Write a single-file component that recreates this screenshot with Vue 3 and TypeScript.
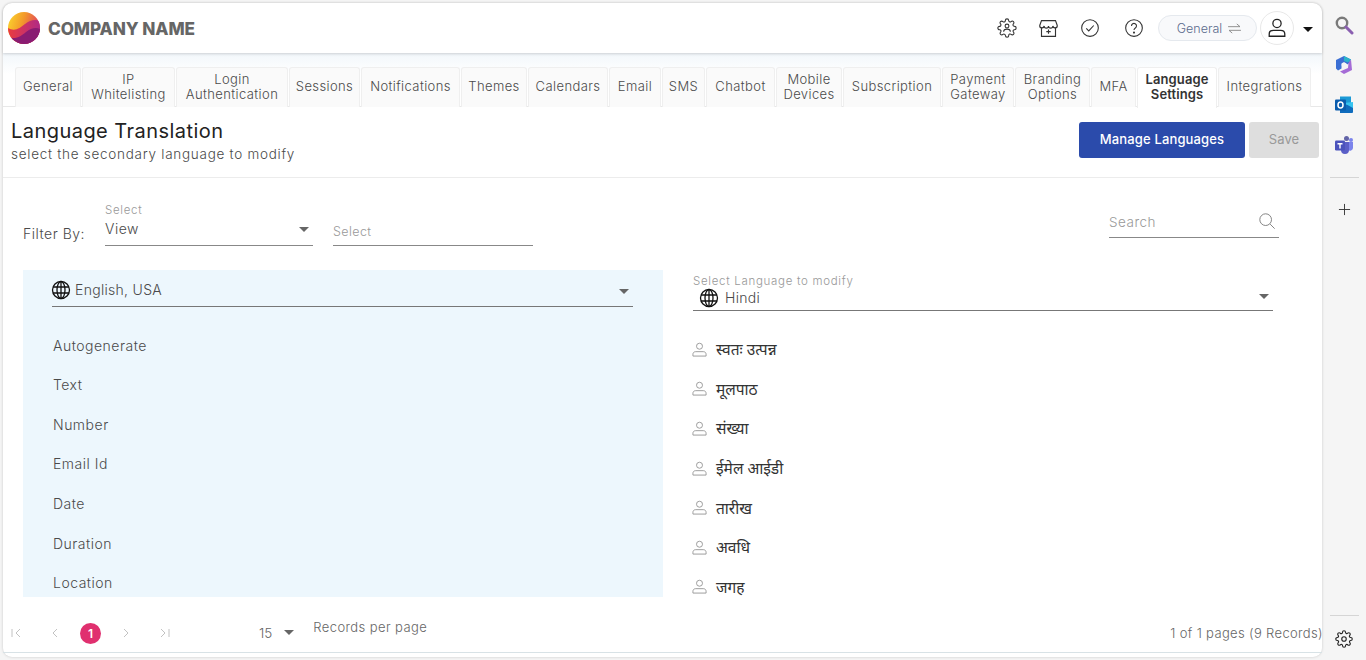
<script setup lang="ts">
const tabs = [
  { label: ['General'], w: 66 },
  { label: ['IP', 'Whitelisting'], w: 93 },
  { label: ['Login', 'Authentication'], w: 112 },
  { label: ['Sessions'], w: 71 },
  { label: ['Notifications'], w: 99 },
  { label: ['Themes'], w: 66 },
  { label: ['Calendars'], w: 80 },
  { label: ['Email'], w: 52 },
  { label: ['SMS'], w: 43 },
  { label: ['Chatbot'], w: 69 },
  { label: ['Mobile', 'Devices'], w: 66 },
  { label: ['Subscription'], w: 98 },
  { label: ['Payment', 'Gateway'], w: 72 },
  { label: ['Branding', 'Options'], w: 75 },
  { label: ['MFA'], w: 45 },
  { label: ['Language', 'Settings'], w: 80, active: true },
  { label: ['Integrations'], w: 93 },
]
const english = ['Autogenerate', 'Text', 'Number', 'Email Id', 'Date', 'Duration', 'Location']
const hindi = ['स्वतः उत्पन्न', 'मूलपाठ', 'संख्या', 'ईमेल आईडी', 'तारीख', 'अवधि', 'जगह']
const gear =
  'M19.4 15a1.65 1.65 0 0 0 .33 1.82l.06.06a2 2 0 0 1 0 2.83 2 2 0 0 1-2.83 0l-.06-.06a1.65 1.65 0 0 0-1.82-.33 1.65 1.65 0 0 0-1 1.51V21a2 2 0 0 1-2 2 2 2 0 0 1-2-2v-.09A1.65 1.65 0 0 0 9 19.4a1.65 1.65 0 0 0-1.82.33l-.06.06a2 2 0 0 1-2.83 0 2 2 0 0 1 0-2.83l.06-.06a1.65 1.65 0 0 0 .33-1.82 1.65 1.65 0 0 0-1.51-1H3a2 2 0 0 1-2-2 2 2 0 0 1 2-2h.09A1.65 1.65 0 0 0 4.6 9a1.65 1.65 0 0 0-.33-1.82l-.06-.06a2 2 0 0 1 0-2.83 2 2 0 0 1 2.83 0l.06.06a1.65 1.65 0 0 0 1.82.33H9a1.65 1.65 0 0 0 1-1.51V3a2 2 0 0 1 2-2 2 2 0 0 1 2 2v.09a1.65 1.65 0 0 0 1 1.51 1.65 1.65 0 0 0 1.82-.33l.06-.06a2 2 0 0 1 2.83 0 2 2 0 0 1 0 2.83l-.06.06a1.65 1.65 0 0 0-.33 1.82V9a1.65 1.65 0 0 0 1.51 1H21a2 2 0 0 1 2 2 2 2 0 0 1-2 2h-.09a1.65 1.65 0 0 0-1.51 1z'
</script>

<template>
  <div class="page">
    <main class="card">
      <header class="topbar">
        <svg class="logo" viewBox="0 0 32 32" aria-hidden="true">
          <defs>
            <clipPath id="logoClip"><circle cx="16" cy="16" r="16" /></clipPath>
            <linearGradient id="lgA" x1="0" y1="0" x2="1" y2="0.3">
              <stop offset="0" stop-color="#fbd92e" />
              <stop offset="0.5" stop-color="#f39a2a" />
              <stop offset="1" stop-color="#e0405f" />
            </linearGradient>
            <linearGradient id="lgB" x1="0" y1="0" x2="1" y2="0">
              <stop offset="0" stop-color="#ea3c3f" />
              <stop offset="1" stop-color="#b02a86" />
            </linearGradient>
          </defs>
          <g clip-path="url(#logoClip)">
            <rect width="32" height="32" fill="url(#lgA)" />
            <path d="M0 16c7 4 12 0 17-4s10-5 15-3v23H0z" fill="url(#lgB)" />
            <path d="M0 25c8 3 13-1 18-5s10-5 14-3v15H0z" fill="#8a1c72" />
          </g>
        </svg>
        <span class="brand">COMPANY NAME</span>
        <div class="top-actions">
          <svg class="ticon cog" viewBox="0 0 24 24">
            <path :d="gear" />
            <circle cx="12" cy="9.6" r="2.3" />
            <path d="M8 16.5c0-2 1.8-3.2 4-3.2s4 1.200 4 3.200" />
          </svg>
          <svg class="ticon store" viewBox="0 0 24 24">
            <path d="M4 3h16l2 5.500a2.500 2.500 0 0 1-5 .5 2.500 2.500 0 0 1-5 0 2.500 2.500 0 0 1-5 0 2.500 2.500 0 0 1-5-.5z" />
            <path d="M4 11v10h16V11M12 13v5M9.500 15.500h5" />
          </svg>
          <svg class="ticon check" viewBox="0 0 24 24">
            <circle cx="12" cy="12" r="10" />
            <path d="M7.500 12.500l3 3 6-6.500" />
          </svg>
          <svg class="ticon help" viewBox="0 0 24 24">
            <circle cx="12" cy="12" r="10" />
            <path d="M9 9.500a3 3 0 1 1 4.600 2.500c-1 .7-1.600 1.300-1.600 2.500" />
            <circle cx="12" cy="17.500" r=".6" />
          </svg>
          <div class="pill">
            <span>General</span>
            <svg viewBox="0 0 16 12" class="swap">
              <path d="M1 4h13L10.500 1M15 8H2l3.500 3" />
            </svg>
          </div>
          <div class="avatar">
            <svg viewBox="0 0 24 24">
              <circle cx="12" cy="7" r="4.500" />
              <path d="M3.500 21v-2.500c0-2.500 2-4 4.500-4h8c2.500 0 4.500 1.500 4.500 4V21z" />
            </svg>
          </div>
          <span class="caret dark"></span>
        </div>
      </header>

      <nav class="tabstrip">
        <div
          v-for="t in tabs"
          :key="t.label[0]"
          class="tab"
          :class="{ active: t.active }"
          :style="{ width: t.w + 'px' }"
        >
          <span v-for="l in t.label" :key="l">{{ l }}</span>
        </div>
      </nav>

      <section class="titlebar">
        <div class="heading">
          <h1>Language Translation</h1>
          <p>select the secondary language to modify</p>
        </div>
        <div class="buttons">
          <button class="primary">Manage Languages</button>
          <button class="disabled">Save</button>
        </div>
      </section>

      <section class="filters">
        <span class="filter-label">Filter By:</span>
        <div class="field f1">
          <small>Select</small>
          <div class="value">View<span class="caret"></span></div>
        </div>
        <div class="field f2">
          <div class="placeholder">Select</div>
        </div>
        <div class="search">
          <span>Search</span>
          <svg viewBox="0 0 20 20">
            <circle cx="8.500" cy="8.500" r="6.500" />
            <path d="M13.500 13.500l5 5" />
          </svg>
        </div>
      </section>

      <section class="content">
        <div class="source">
          <div class="lang-select">
            <svg class="globe" viewBox="0 0 20 20">
              <circle cx="10" cy="10" r="8.500" />
              <ellipse cx="10" cy="10" rx="4" ry="8.500" />
              <path d="M10 1.500v17M2 7h16M2 13h16" />
            </svg>
            <span>English, USA</span>
            <span class="caret"></span>
          </div>
          <div v-for="e in english" :key="e" class="row src-row">{{ e }}</div>
        </div>
        <div class="target">
          <small>Select Language to modify</small>
          <div class="lang-select tgt">
            <svg class="globe" viewBox="0 0 20 20">
              <circle cx="10" cy="10" r="8.500" />
              <ellipse cx="10" cy="10" rx="4" ry="8.500" />
              <path d="M10 1.500v17M2 7h16M2 13h16" />
            </svg>
            <span>Hindi</span>
            <span class="caret"></span>
          </div>
          <div v-for="h in hindi" :key="h" class="row tgt-row">
            <svg class="person" viewBox="0 0 16 16">
              <circle cx="8" cy="4.500" r="3.200" />
              <path d="M1 15v-2c0-1.600 1.200-2.700 3-2.700h8c1.800 0 3 1.100 3 2.700v2z" />
            </svg>
            <span>{{ h }}</span>
          </div>
        </div>
      </section>

      <footer class="pager">
        <div class="nav">
          <svg viewBox="0 0 12 12"><path d="M2 2v8M10 2L6 6l4 4" /></svg>
          <svg viewBox="0 0 12 12"><path d="M8 2L4 6l4 4" /></svg>
          <span class="current">1</span>
          <svg viewBox="0 0 12 12"><path d="M4 2l4 4-4 4" /></svg>
          <svg viewBox="0 0 12 12"><path d="M2 2l4 4-4 4M10 2v8" /></svg>
        </div>
        <div class="per-page">
          <span class="num">15</span>
          <span class="caret big"></span>
          <span class="rpp">Records per page</span>
        </div>
        <div class="summary">1 of 1 pages (9 Records)</div>
      </footer>
    </main>

    <aside class="rail">
      <svg class="r-icon" viewBox="0 0 20 20">
        <circle cx="8" cy="8" r="5.200" fill="none" stroke="#7a7a7a" stroke-width="2.400" />
        <path d="M12 12l6 6" stroke="#8a5fb0" stroke-width="3" stroke-linecap="round" />
      </svg>
      <svg class="r-icon" viewBox="0 0 20 20">
        <path d="M10 1l7 3.500-3 5-4-2.300-2.500 1.300v5l-3.500 2-2-2V5z" fill="#3b6fd4" />
        <path d="M17 4.500L18 15l-8 4-4-2.500 8-3.500 .500-5z" fill="#a56bd6" />
        <path d="M10 1l7 3.500-3 3-4-1.500z" fill="#2bb3c9" />
        <circle cx="10" cy="10" r="2.400" fill="#f5f5f5" />
      </svg>
      <svg class="r-icon" viewBox="0 0 20 20">
        <rect x="6" y="1.500" width="11" height="9" fill="#1c9ad6" />
        <path d="M6 10h13v7a1 1 0 0 1-1 1H6z" fill="#0f6cbd" />
        <path d="M10 8l9 5v-6z" fill="#36c3ef" />
        <rect x="1" y="4.500" width="11" height="11" rx="1" fill="#0a5cad" />
        <ellipse cx="6.500" cy="10" rx="2.500" ry="3" fill="none" stroke="#fff" stroke-width="1.500" />
      </svg>
      <svg class="r-icon" viewBox="0 0 20 20">
        <circle cx="12.500" cy="3.500" r="2.500" fill="#6264a7" />
        <circle cx="17" cy="5" r="2" fill="#7b83eb" />
        <path d="M13 7h6v6a3 3 0 0 1-5 2z" fill="#7b83eb" />
        <path d="M6 7h9v8a4 4 0 0 1-8 0z" fill="#5b5fc7" />
        <rect x="1" y="5.500" width="10" height="10" rx="1.200" fill="#4b53bc" />
        <path d="M3.500 8h5v1.400H6.700V13.500H5.300V9.400H3.500z" fill="#fff" />
      </svg>
      <div class="rail-line top"></div>
      <svg class="plus" viewBox="0 0 14 14"><path d="M7 1v12M1 7h12" /></svg>
      <div class="rail-bottom">
        <div class="rail-line"></div>
        <svg class="r-gear" viewBox="0 0 24 24">
          <path :d="gear" />
          <circle cx="12" cy="12" r="3" />
        </svg>
      </div>
    </aside>
  </div>
</template>

<style>
html,
body {
  margin: 0;
  background: #f5f5f5;
}
</style>

<style scoped>
.page {
  display: flex;
  height: 660px;
  width: 1366px;
  overflow: hidden;
  background: #f5f5f5;
  font-family: Inter, 'Noto Sans', 'Liberation Sans', sans-serif;
  font-weight: 350;
  color: #4a4a4a;
  font-size: 13px;
}
.card {
  width: 1319px;
  height: 654px;
  margin: 3px 0 0 3px;
  background: #fff;
  border-radius: 9px;
  box-shadow: 0 0 3px rgba(0, 0, 0, 0.18);
  display: flex;
  flex-direction: column;
  flex: none;
}
.topbar {
  height: 50px;
  display: flex;
  align-items: center;
  padding-left: 5px;
  box-shadow: 0 1px 3px rgba(0, 0, 0, 0.16);
  position: relative;
  flex: none;
  border-radius: 9px 9px 0 0;
}
.logo {
  width: 32px;
  height: 32px;
}
.brand {
  margin-left: 8px;
  font-weight: 800;
  font-size: 17.2px;
  color: #666;
  letter-spacing: -0.1px;
}
.top-actions {
  margin-left: auto;
  display: flex;
  align-items: center;
  height: 100%;
}
.ticon {
  width: 20px;
  height: 20px;
  fill: none;
  stroke: #333;
  stroke-width: 1.300;
  margin-right: 21px;
}
.cog {
  margin-right: 22px;
}
.store {
  width: 21px;
  height: 21px;
  margin-left: -1px;
  margin-right: 21px;
}
.check {
  margin-right: 24px;
}
.help {
  margin-right: 14px;
}
.pill {
  width: 99px;
  height: 26px;
  box-sizing: border-box;
  border: 1px solid #e5e9ee;
  background: #f8f9fb;
  border-radius: 13px;
  display: flex;
  align-items: center;
  justify-content: center;
  gap: 5px;
  color: #5a6a8c;
  font-size: 12.500px;
  padding-left: 4px;
}
.swap {
  width: 15px;
  height: 11px;
  fill: none;
  stroke: #888;
  stroke-width: 1;
}
.avatar {
  width: 34px;
  height: 34px;
  box-sizing: border-box;
  margin-left: 3px;
  border: 1px solid #e8e8e8;
  border-radius: 50%;
  display: flex;
  align-items: center;
  justify-content: center;
}
.avatar svg {
  width: 22px;
  height: 22px;
  fill: none;
  stroke: #222;
  stroke-width: 1.400;
}
.caret {
  width: 0;
  height: 0;
  border-left: 5px solid transparent;
  border-right: 5px solid transparent;
  border-top: 5px solid #666;
  display: inline-block;
}
.caret.dark {
  border-top-color: #111;
  margin: 2px 9px 0 9px;
}
.tabstrip {
  height: 54px;
  box-sizing: border-box;
  flex: none;
  padding: 14px 0 0 12px;
  display: flex;
  gap: 1px;
  background: linear-gradient(#f2f7fb, #ffffff 40%);
  border-bottom: 1px solid #e8e8e8;
}
.tab {
  height: 40px;
  box-sizing: border-box;
  padding-bottom: 2px;
  background: #fafafa;
  border: 1px solid #efefef;
  border-bottom: none;
  border-radius: 3px 3px 0 0;
  display: flex;
  flex-direction: column;
  align-items: center;
  justify-content: center;
  font-size: 13px;
  line-height: 15px;
  color: #4a4a4a;
  flex: none;
  white-space: nowrap;
  letter-spacing: 0.4px;
}
.tab.active {
  background: #fff;
  height: 41px;
  padding-bottom: 3px;
  color: #333;
  font-weight: 600;
  letter-spacing: 0.1px;
}
.titlebar {
  height: 71px;
  box-sizing: border-box;
  flex: none;
  display: flex;
  justify-content: space-between;
  padding: 15px 3px 0 8px;
  border-bottom: 1px solid #ececec;
}
.heading {
  margin-top: -1px;
}
h1 {
  margin: 0;
  font-size: 20px;
  font-weight: 400;
  line-height: 20px;
  color: #222;
  letter-spacing: 0.45px;
}
.titlebar p {
  margin: 5px 0 0;
  font-size: 13.500px;
  line-height: 16px;
  color: #4a4a4a;
  letter-spacing: 0.73px;
}
.buttons {
  display: flex;
  gap: 4px;
}
button {
  height: 36px;
  padding: 0 0 2px;
  border: none;
  border-radius: 3px;
  font-family: inherit;
  font-size: 13px;
  font-weight: 500;
  letter-spacing: 0.15px;
}
.primary {
  width: 166px;
  background: #2b4bab;
  color: #fff;
}
.disabled {
  width: 70px;
  background: #dedede;
  color: #999;
  font-weight: 400;
}
.filters {
  height: 92px;
  box-sizing: border-box;
  flex: none;
  padding: 0 43px 24px 20px;
  display: flex;
  align-items: flex-end;
}
.filter-label {
  width: 82px;
  margin-bottom: 4px;
  font-size: 14px;
  letter-spacing: 0.5px;
  white-space: nowrap;
}
.field {
  border-bottom: 1px solid #888;
  box-sizing: border-box;
}
small {
  display: block;
  font-size: 11.500px;
  line-height: 14px;
  color: #999;
  letter-spacing: 0.7px;
}
.f1 {
  width: 208px;
  height: 44px;
  padding-top: 1px;
}
.value {
  display: flex;
  justify-content: space-between;
  align-items: center;
  padding: 4px 4px 0 0;
  line-height: 16px;
  font-size: 14px;
  letter-spacing: 0.5px;
}
.f2 {
  width: 200px;
  margin-left: 20px;
  height: 24px;
  padding-top: 2px;
}
.placeholder {
  font-size: 12.500px;
  color: #999;
  line-height: 16px;
  letter-spacing: 0.4px;
}
.search {
  margin-left: auto;
  margin-bottom: 8px;
  width: 170px;
  height: 26px;
  box-sizing: border-box;
  border-bottom: 1px solid #888;
  padding-top: 2px;
  display: flex;
  justify-content: space-between;
  align-items: flex-start;
  color: #999;
  font-size: 13.500px;
  line-height: 16px;
  letter-spacing: 0.5px;
}
.search svg {
  width: 18px;
  height: 18px;
  fill: none;
  stroke: #777;
  margin: -2px 3px 0 0;
}
.content {
  height: 327px;
  flex: none;
  display: flex;
  padding-left: 20px;
  gap: 30px;
}
.source {
  width: 640px;
  height: 100%;
  background: #edf7fd;
  padding-left: 30px;
  box-sizing: border-box;
  overflow: hidden;
}
.lang-select {
  display: flex;
  align-items: center;
  gap: 4px;
  box-sizing: border-box;
  border-bottom: 1px solid #777;
  width: 581px;
  margin-left: -1px;
  height: 37px;
  padding: 3px 4px 0 0;
  font-size: 14px;
  letter-spacing: 0.3px;
  margin-bottom: 18.300px;
}
.lang-select .caret {
  margin-left: auto;
  margin-top: 4px;
}
.globe {
  width: 20px;
  height: 20px;
  margin-left: -1px;
  flex: none;
  fill: none;
  stroke: #111;
  stroke-width: 1.300;
}
.row {
  height: 39.600px;
  display: flex;
  align-items: center;
  font-size: 14px;
  letter-spacing: 0.5px;
  box-sizing: border-box;
}
.target {
  width: 580px;
  padding-top: 4px;
}
.lang-select.tgt {
  margin: 0 0 19px;
  width: 580px;
  height: 23px;
  gap: 6px;
  padding: 0 4px 3px 7px;
}
.lang-select.tgt .caret {
  margin-top: 0;
  margin-bottom: 2px;
}
.tgt-row {
  gap: 9px;
  font-family: 'Noto Sans', 'Liberation Sans', 'DejaVu Sans', sans-serif;
  font-weight: 400;
  color: #333;
  font-size: 15.500px;
  letter-spacing: 0;
  padding-bottom: 1px;
  margin-left: -1px;
}
.person {
  width: 15px;
  height: 15px;
  fill: none;
  stroke: #999;
  stroke-width: 1;
  flex: none;
}
.pager {
  flex: none;
  height: 56px;
  box-sizing: border-box;
  border-bottom: 1px solid #d8e2e6;
  display: flex;
  position: relative;
  align-items: center;
  padding: 16px 0 0 0;
}
.nav {
  display: flex;
  align-items: center;
  width: 168px;
  padding-left: 7px;
  box-sizing: border-box;
}
.nav svg {
  width: 12px;
  height: 12px;
  fill: none;
  stroke: #c2c2c2;
  stroke-width: 1;
  flex: none;
}
.nav svg:nth-child(2) {
  margin-left: 27px;
}
.current {
  width: 21px;
  height: 21px;
  border-radius: 50%;
  background: #e0306f;
  color: #fff;
  font-size: 12px;
  font-weight: 600;
  display: flex;
  align-items: center;
  justify-content: center;
  margin: 1px 0 0 19px;
  flex: none;
}
.nav svg:nth-child(4) {
  margin-left: 19px;
}
.nav svg:nth-child(5) {
  margin-left: 27px;
}
.per-page {
  margin-left: 88px;
  display: flex;
  align-items: center;
  color: #666;
}
.num {
  font-size: 13.500px;
}
.caret.big {
  margin-left: 12px;
}
.rpp {
  margin-left: 19px;
  margin-top: -11px;
  font-size: 13px;
  letter-spacing: 0.4px;
}
.summary {
  margin-left: auto;
  margin-right: -1px;
  font-size: 13px;
  color: #666;
  white-space: nowrap;
  letter-spacing: 0.35px;
}
.rail {
  flex: 1;
  display: flex;
  flex-direction: column;
  align-items: center;
  padding-top: 15px;
  min-width: 0;
}
.r-icon {
  width: 20px;
  height: 20px;
  flex: none;
  margin-bottom: 20px;
}
.rail-line {
  width: 29px;
  height: 1px;
  background: #d5d5d5;
  flex: none;
}
.rail-line.top {
  margin-top: 2px;
}
.plus {
  width: 13px;
  height: 13px;
  flex: none;
  margin-top: 25px;
  fill: none;
  stroke: #333;
  stroke-width: 1;
}
.rail-bottom {
  margin-top: auto;
  display: flex;
  flex-direction: column;
  align-items: center;
  padding-bottom: 12px;
}
.r-gear {
  width: 18px;
  height: 18px;
  margin-top: 14px;
  fill: none;
  stroke: #222;
  stroke-width: 1.500;
}
</style>
